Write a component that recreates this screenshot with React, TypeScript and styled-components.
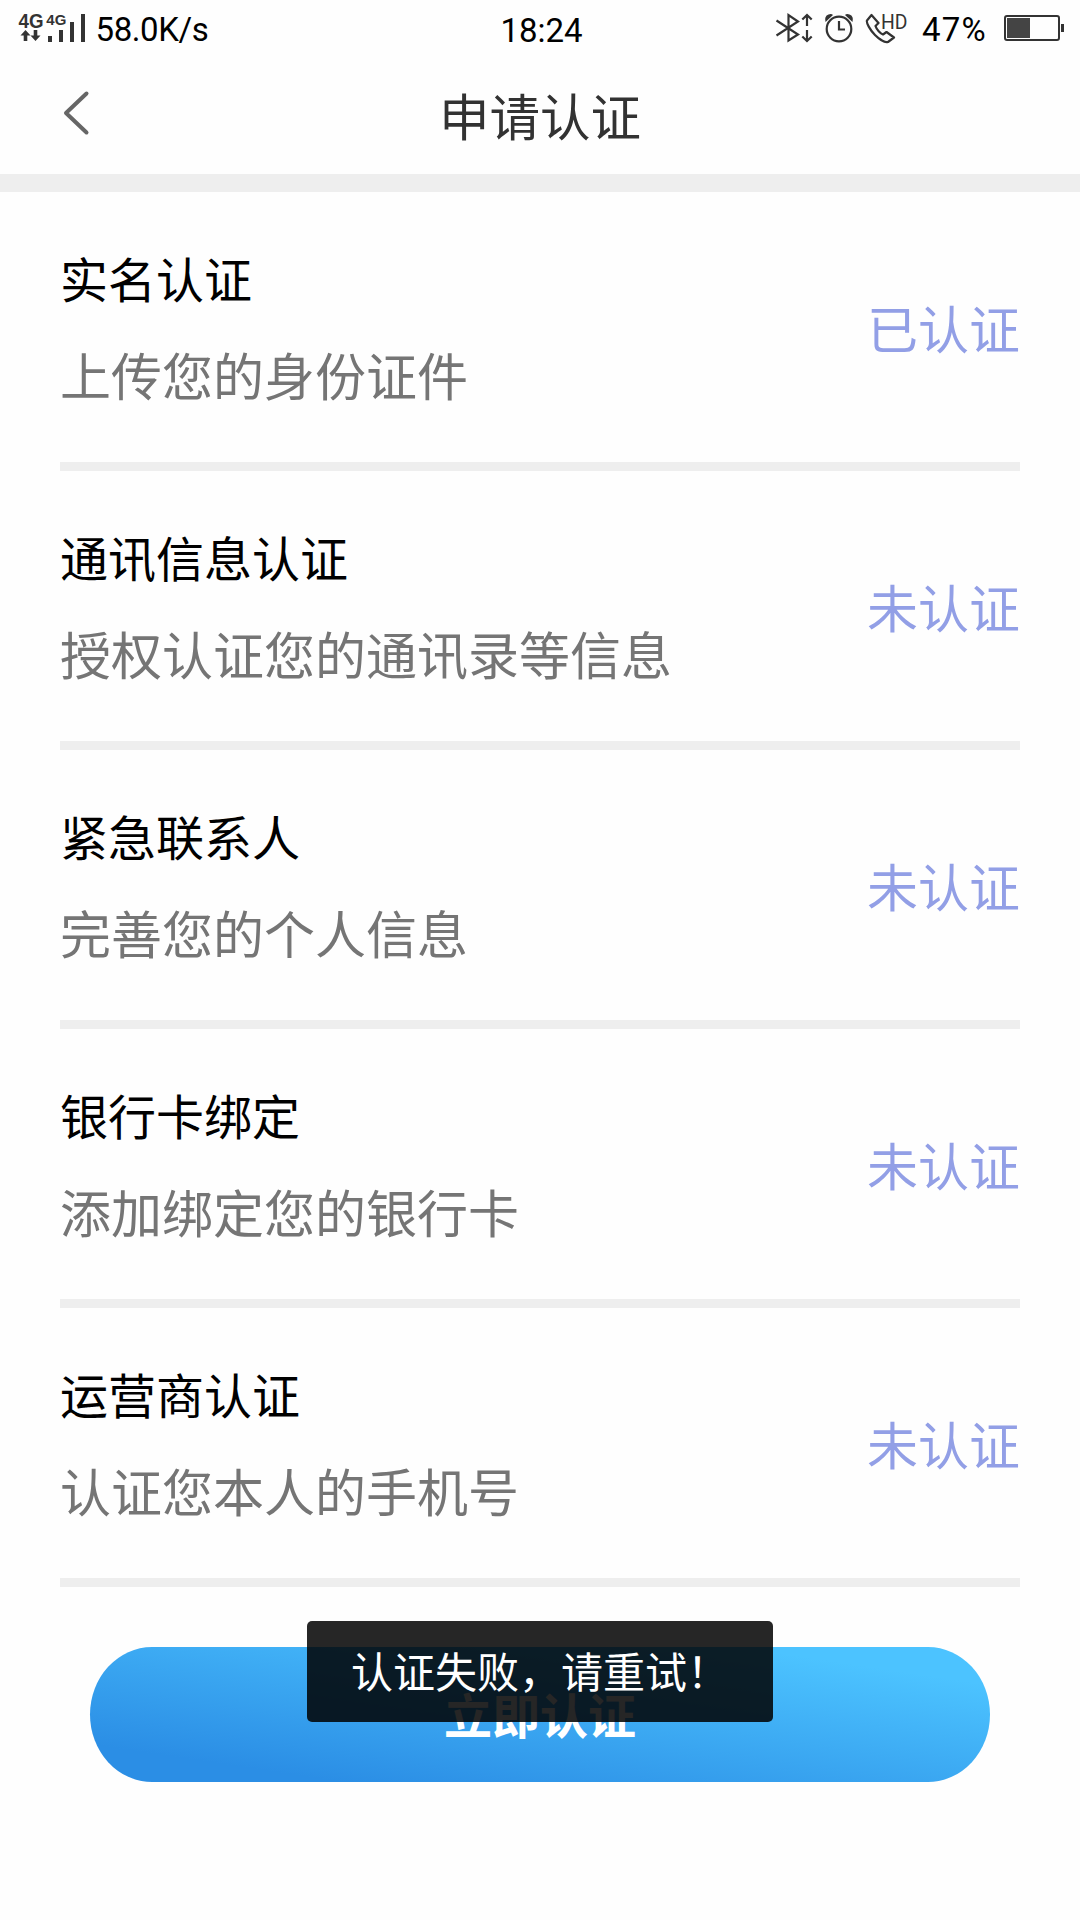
import React from "react";
import styled, { createGlobalStyle } from "styled-components";

const GlobalStyle = createGlobalStyle`
  * { box-sizing: border-box; }
  body {
    margin: 0;
    background: #fff;
    font-family: "Noto Sans CJK SC", "Noto Sans", sans-serif;
  }
`;

const Screen = styled.main`
  position: relative;
  display: flex;
  flex-direction: column;
  width: 1080px;
  height: 1920px;
  overflow: hidden;
  background: #fefefe;
`;

const StatusBar = styled.div`
  display: grid;
  grid-template-columns: 1fr auto 1fr;
  align-items: center;
  height: 58px;
  padding: 0 15px 0 18px;
  color: #000;
  font-family: Roboto, "Noto Sans CJK SC", sans-serif;
  font-size: 33px;
  line-height: 58px;
`;

const StatusGroup = styled.div<{ $end?: boolean }>`
  display: flex;
  align-items: center;
  justify-content: ${(p) => (p.$end ? "flex-end" : "flex-start")};
  height: 58px;
`;

const StatusText = styled.span<{
  $before?: number;
  $after?: number;
  $width?: number;
  $tracking?: number;
  $drop?: number;
}>`
  width: ${(p) => (p.$width ? `${p.$width}px` : "auto")};
  margin-left: ${(p) => p.$before ?? 0}px;
  margin-right: ${(p) => p.$after ?? 0}px;
  padding-top: ${(p) => p.$drop ?? 0}px;
  letter-spacing: ${(p) => p.$tracking ?? 0}px;
  white-space: nowrap;
`;

const Glyph = styled.svg<{ $after?: number }>`
  display: block;
  flex: none;
  margin-right: ${(p) => p.$after ?? 0}px;
`;

const NavBar = styled.header`
  display: grid;
  grid-template-columns: 120px 1fr 120px;
  align-items: center;
  height: 116px;
`;

const BackButton = styled.button`
  display: flex;
  width: 60px;
  margin-left: 60px;
  padding: 0 0 7px;
  border: 0;
  background: none;
`;

const NavTitle = styled.h1`
  margin: 0;
  padding-bottom: 4px;
  text-align: center;
  color: #323232;
  font-size: 50.5px;
  font-weight: 400;
  line-height: 112px;
`;

const Band = styled.div`
  height: 18px;
  background: #eee;
`;

const List = styled.ul`
  margin: 0;
  padding: 0 60px;
  list-style: none;
`;

const Row = styled.li`
  display: flex;
  align-items: center;
  justify-content: space-between;
  height: 279px;
  border-bottom: 9px solid #eee;
`;

const RowText = styled.div`
  display: flex;
  flex-direction: column;
  gap: 25px;
  padding-bottom: 3px;
`;

const RowTitle = styled.span`
  color: #000;
  font-size: 48px;
  line-height: 72px;
`;

const RowHint = styled.span`
  color: #757575;
  font-size: 51px;
  line-height: 72px;
`;

const RowState = styled.span`
  padding-bottom: 1px;
  color: #929fe6;
  font-size: 51px;
  line-height: 72px;
`;

const SubmitButton = styled.button`
  display: flex;
  align-items: center;
  justify-content: center;
  width: 900px;
  height: 135px;
  margin: 60px auto 0;
  padding: 0 0 3px;
  border: 0;
  border-radius: 62px / 67.5px;
  background: linear-gradient(to top right, #2b8ee5 14%, #4cc3ff 86%);
  color: #fff;
  font-family: inherit;
  font-size: 48px;
  font-weight: 700;
`;

const Toast = styled.div`
  position: absolute;
  left: 307px;
  top: 1621px;
  display: flex;
  align-items: center;
  justify-content: center;
  width: 466px;
  height: 101px;
  padding-bottom: 4px;
  border-radius: 5px;
  background: rgba(0, 0, 0, 0.85);
  color: #fff;
  font-size: 42px;
  white-space: nowrap;
`;

const items = [
  { title: "实名认证", hint: "上传您的身份证件", state: "已认证" },
  { title: "通讯信息认证", hint: "授权认证您的通讯录等信息", state: "未认证" },
  { title: "紧急联系人", hint: "完善您的个人信息", state: "未认证" },
  { title: "银行卡绑定", hint: "添加绑定您的银行卡", state: "未认证" },
  { title: "运营商认证", hint: "认证您本人的手机号", state: "未认证" },
];

const SignalIcon = () => (
  <Glyph width="70" height="58" viewBox="18 0 70 58" fill="#333">
    <g fontFamily="Liberation Sans, sans-serif" fontWeight="700">
      <text x="18.5" y="26.7" fontSize="19.5" textLength="25" lengthAdjust="spacingAndGlyphs">4G</text>
      <text x="46.3" y="23.8" fontSize="15" textLength="20" lengthAdjust="spacingAndGlyphs">4G</text>
    </g>
    <path d="M25.500 29l5 5.500h-3.200v5.500h-3.600v-5.500h-3.200zM35.500 40l-5-5.500h3.200v-5.500h3.600v5.500h3.200z" />
    <path d="M48 35h4v6h-4zM59 29h4v12h-4zM70 21h4v20h-4zM81 13h4v28h-4z" />
  </Glyph>
);

const BluetoothIcon = () => (
  <Glyph $after={11} width="38" height="58" viewBox="775 0 38 58" fill="none" stroke="#333" strokeWidth="2.200">
    <path d="M776.500 19.500L798 33.500l-9.500 6V14l9.500 6.500L776.500 34.500" />
    <path d="M807 25V14.500M802.300 18.500l4.700-4.500 4.700 4.500M807 29v11M802.300 35.500l4.700 4.500 4.700-4.500" />
  </Glyph>
);

const AlarmIcon = () => (
  <Glyph $after={11} width="30" height="58" viewBox="824 0 30 58" fill="none" stroke="#333" strokeWidth="2.200">
    <circle cx="839" cy="28" r="12.300" />
    <path d="M839 20v8.500h6" />
    <path fill="#333" stroke="none" d="M825.500 21q-1.500-6 3-7.500 3-1 4.500.5zM852.500 21q1.500-6-3-7.500-3-1-4.500.5z" />
  </Glyph>
);

const CallIcon = () => (
  <Glyph width="44" height="58" viewBox="865 0 44 58" fill="none" stroke="#333" strokeWidth="2.200">
    <path strokeLinejoin="round" d="M871.500 14l-4.500 5.500c-1 2 3 9.500 8 14.500s10.500 8 13 7l6-4.500-7.500-5.500-3.500 2.500c-2.500-1-6.500-5-7.500-8.500l3-3z" />
    <text x="881" y="27.5" fill="#333" stroke="none" fontFamily="Roboto, sans-serif" fontSize="19.500" textLength="26.500" lengthAdjust="spacingAndGlyphs">HD</text>
  </Glyph>
);

const BatteryIcon = () => (
  <Glyph width="61" height="58" viewBox="1004 0 61 58" fill="none" stroke="#333" strokeWidth="2">
    <rect x="1005" y="15" width="54" height="24" rx="2" />
    <path fill="#444" stroke="none" d="M1007 17h23v20h-23z" />
    <path fill="#333" stroke="none" d="M1061 23h3v8h-3z" />
  </Glyph>
);

export default function App() {
  return (
    <>
      <GlobalStyle />
      <Screen>
        <StatusBar>
          <StatusGroup>
            <SignalIcon />
            <StatusText $before={7.5} $tracking={-0.4}>58.0K/s</StatusText>
          </StatusGroup>
          <StatusText $drop={2}>18:24</StatusText>
          <StatusGroup $end>
            <BluetoothIcon />
            <AlarmIcon />
            <CallIcon />
            <StatusText $before={13} $after={16} $width={66} $tracking={1.2}>47%</StatusText>
            <BatteryIcon />
          </StatusGroup>
        </StatusBar>
        <NavBar>
          <BackButton aria-label="返回">
            <Glyph width="32" height="46" viewBox="60 90 32 46" fill="none" stroke="#666" strokeWidth="4" strokeLinecap="round" strokeLinejoin="round">
              <path d="M86.500 93.500L66 113l20.500 19.500" />
            </Glyph>
          </BackButton>
          <NavTitle>申请认证</NavTitle>
        </NavBar>
        <Band />
        <List>
          {items.map((item) => (
            <Row key={item.title}>
              <RowText>
                <RowTitle>{item.title}</RowTitle>
                <RowHint>{item.hint}</RowHint>
              </RowText>
              <RowState>{item.state}</RowState>
            </Row>
          ))}
        </List>
        <SubmitButton>立即认证</SubmitButton>
        <Toast>认证失败，请重试！</Toast>
      </Screen>
    </>
  );
}
